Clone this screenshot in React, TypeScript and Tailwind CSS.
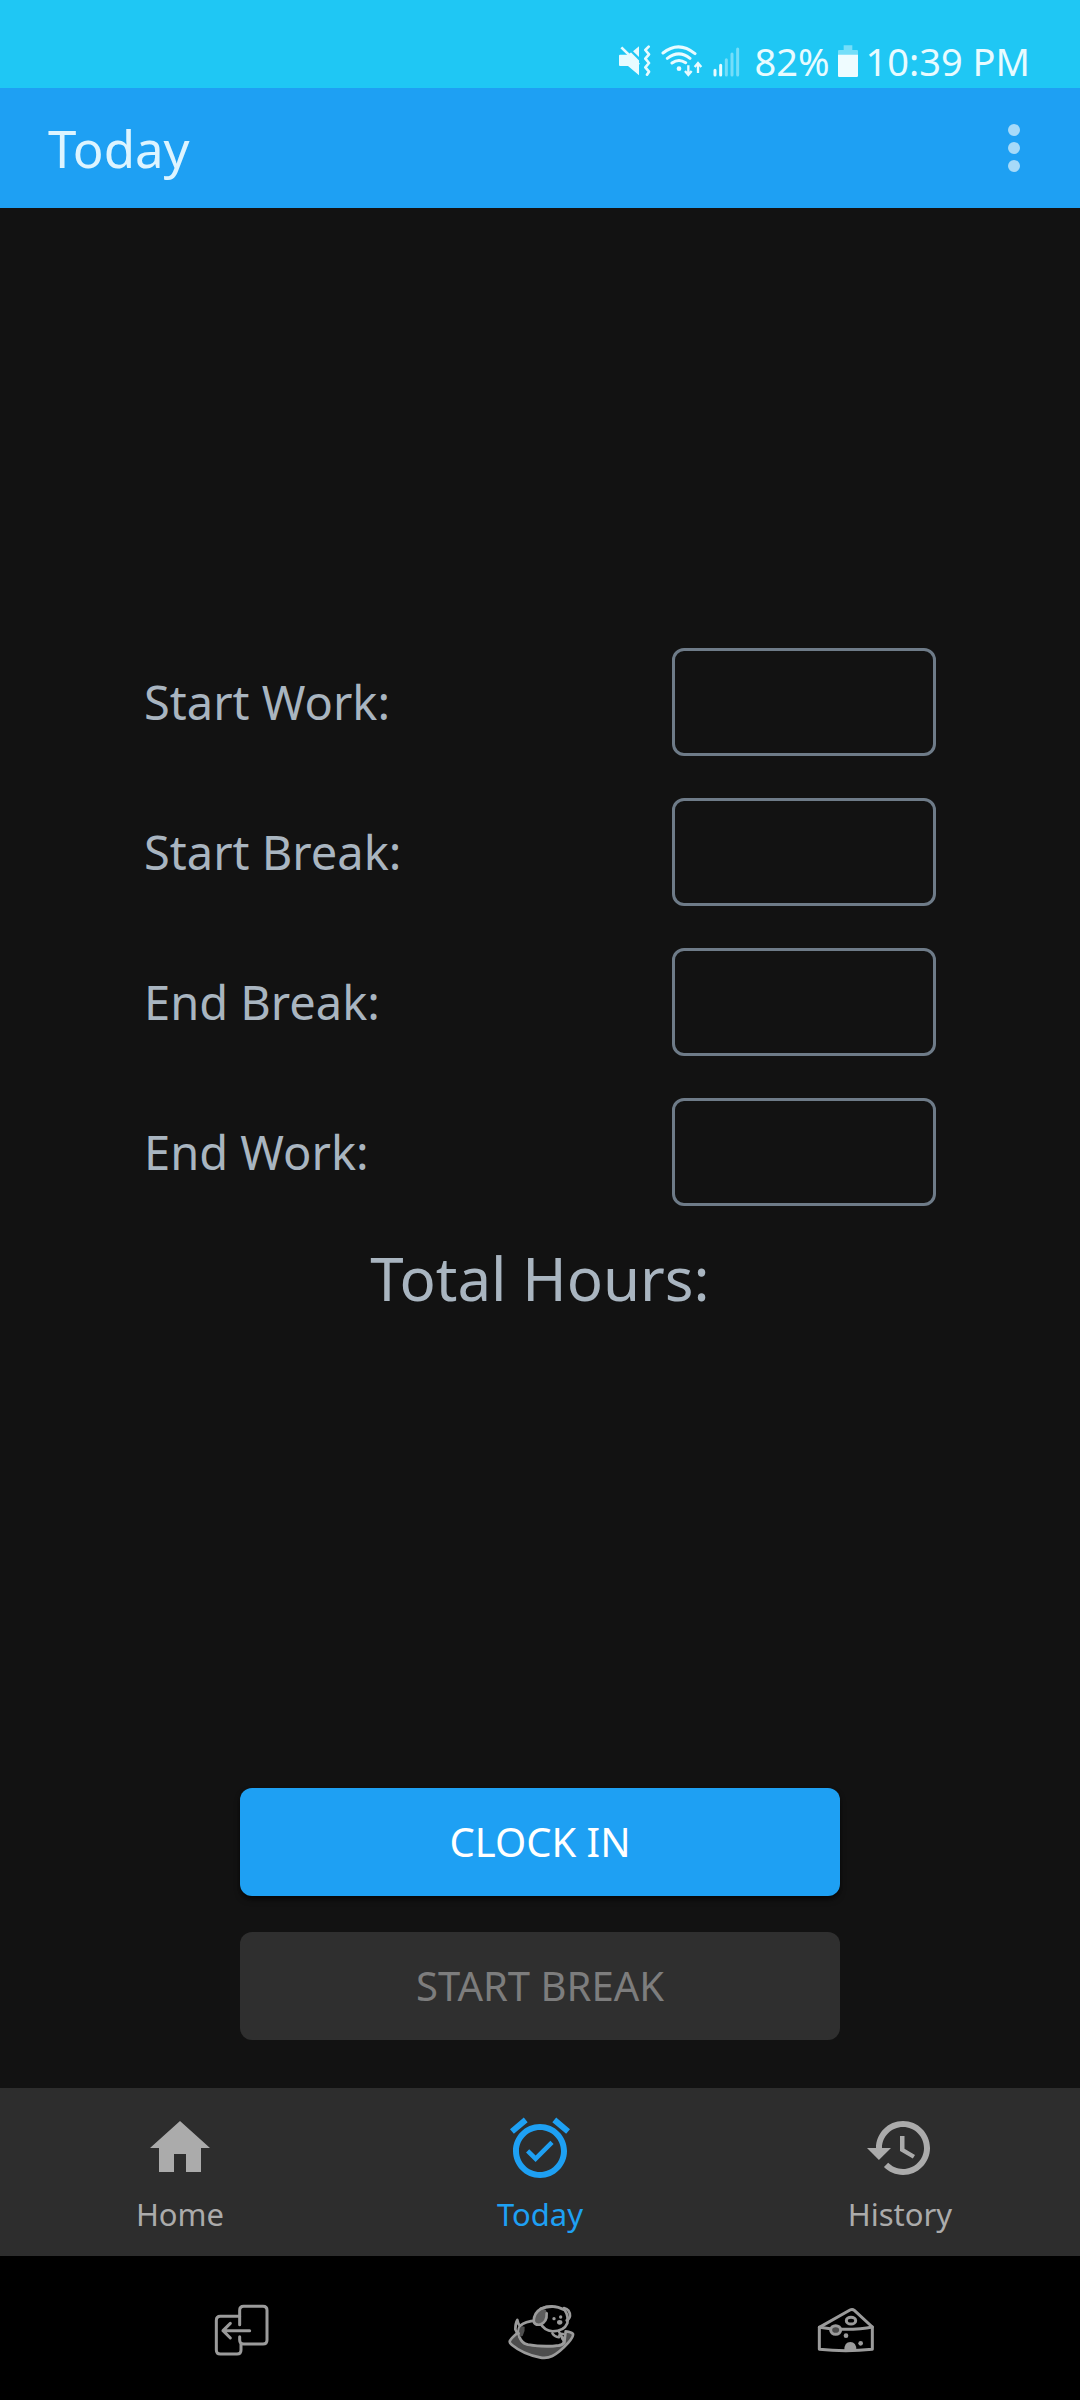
import type { ReactNode } from "react";

const fields = [
  { id: "start-work", label: "Start Work:" },
  { id: "start-break", label: "Start Break:" },
  { id: "end-break", label: "End Break:" },
  { id: "end-work", label: "End Work:" },
];

function MutedIcon() {
  return (
    <svg viewBox="57 75 96 96" className="size-8" fill="none" aria-hidden="true">
      <path d="M60 104h24l33-26v88l-33-28H60q-3 0-3-3v-28q0-3 3-3z" fill="#e8fbff" />
      <path d="M68 72l56 56V68z" fill="#1fc7f4" />
      <path d="M64 82l53 52" stroke="#e8fbff" strokeWidth="8" />
      <path d="M99 94l18-15v32z" fill="#e8fbff" />
      <path d="M146 80l-10 10 11 13-11 13 11 13-11 13 11 13-6 9" stroke="#e8fbff" strokeWidth="8" strokeLinejoin="round" strokeLinecap="round" />
    </svg>
  );
}

function WifiIcon() {
  return (
    <svg viewBox="186 75 126 96" className="h-8 w-[42px]" fill="none" stroke="#e8fbff" aria-hidden="true">
      <path d="M192 99q47-38 96 2M205 115q35-27 68 0M219 129q20-15 41-1" strokeWidth="9" strokeLinecap="round" />
      <circle cx="240" cy="146" r="7" fill="#e8fbff" stroke="none" />
      <path d="M268 136v28M258 153l10 12 10-12M297 159v-29M287 141l10-12 10 12" strokeWidth="7" />
    </svg>
  );
}

function SignalIcon() {
  return (
    <svg viewBox="333 75 81 96" className="h-8 w-[27px]" strokeWidth="9" strokeLinecap="round" aria-hidden="true">
      <path d="M339 151v14M356 136v29" stroke="#e8fbff" />
      <path d="M373 119v46M390 102v63M407 87v78" stroke="#75def9" />
    </svg>
  );
}

function BatteryIcon() {
  return (
    <svg viewBox="51 75 60 96" className="h-8 w-5" aria-hidden="true">
      <path d="M68 76h26v14h14q3 0 3 3v14H51V93q0-3 3-3h14z" fill="#75def9" />
      <path d="M51 104h60v63q0 4-4 4H55q-4 0-4-4z" fill="#effcff" />
    </svg>
  );
}

function BackIcon() {
  return (
    <svg viewBox="-15 -12 300 240" className="h-20 w-[100px]" fill="none" stroke="#9b9b9b" strokeWidth="9" strokeLinecap="round" strokeLinejoin="round" aria-hidden="true">
      <path d="M134 98V55q0-12 12-12h58q12 0 12 12v89q0 12-12 12h-58q-12 0-12-12v-10" />
      <path d="M134 73H76q-12 0-12 12v89q0 12 12 12h50q12 0 12-12v-16" />
      <path d="M84 116h80M106 94l-22 22 22 22" />
    </svg>
  );
}

function DogIcon() {
  return (
    <svg viewBox="0 -6 300 240" className="h-20 w-[100px]" fill="none" stroke="#9b9b9b" strokeWidth="8" strokeLinecap="round" strokeLinejoin="round" aria-hidden="true">
      <path d="M86 126q-20 16-26 26-3 6 5 12 34 28 84 38 20 5 38-4 22-11 48-40 16-18 14-26-4-6-22-8l-4 34q-8 10-28 10-60 2-92-8-16-12-17-34z" fill="#4d4d4d" />
      <path d="M140 92q-36 2-50 16-8 14-2 32 8 20 26 24 50 8 92 2 18-3 16-16-4-12-14-14" fill="#000" />
      <path d="M92 108l12 2q2 14-6 28l-8 2q-6-18 2-32z" fill="#4d4d4d" stroke="none" />
      <path d="M82 90q-6 10-6 28 2 8 10 12M82 90q2 12 8 18" />
      <path d="M152 56q38-16 72 4 12 18 8 40-10 24-44 24-26-2-38-26z" fill="#000" />
      <path d="M152 57q18-2 18 10 2 28-20 36-16 2-20-10 2-28 22-36z" fill="#5c5c5c" stroke="none" />
      <path d="M170 70q2 26-20 34-16 2-19-10 1-26 21-37 16-7 34-7" />
      <path d="M222 54q18 4 18 24-2 10-10 13" />
      <path d="M187 130q6 10 20 12M207 125q2 8 12 7M216 145q8 8 6 14" strokeWidth="7" />
      <circle cx="192" cy="86" r="5" fill="#9b9b9b" stroke="none" />
      <circle cx="212" cy="81" r="5" fill="#9b9b9b" stroke="none" />
      <ellipse cx="209" cy="97" rx="8" ry="7" fill="#9b9b9b" stroke="none" />
    </svg>
  );
}

function CheeseIcon() {
  return (
    <svg viewBox="-30 -6 300 240" className="h-20 w-[100px]" fill="none" stroke="#9b9b9b" strokeWidth="9" strokeLinecap="round" strokeLinejoin="round" aria-hidden="true">
      <path d="M58 112l92-52q7-4 13 1l54 50v67q-80 8-159 0z" />
      <path d="M58 112q35 6 64 6 60 1 95-7" />
      <ellipse cx="153" cy="92" rx="14" ry="10" />
      <ellipse cx="107" cy="120" rx="15" ry="13" fill="#4a4a4a" />
      <path d="M133 180q0-24 18-24t18 24z" fill="#9b9b9b" stroke="none" />
      <circle cx="138" cy="137" r="7" fill="#9b9b9b" stroke="none" />
      <circle cx="182" cy="160" r="7" fill="#9b9b9b" stroke="none" />
    </svg>
  );
}

function TabLink({ label, path, active = false }: { label: string; path: string; active?: boolean }) {
  return (
    <a
      href={"#" + label.toLowerCase()}
      aria-current={active ? "page" : undefined}
      className={
        "flex flex-1 flex-col items-center gap-2.5 " + (active ? "text-[#1ea0f3]" : "text-[#ababab]")
      }
    >
      <svg viewBox="0 0 24 24" className="size-[72px]" fill="currentColor" aria-hidden="true">
        <path d={path} />
      </svg>
      <span className="text-[31px] leading-10">{label}</span>
    </a>
  );
}

function SystemButton({ label, children }: { label: string; children: ReactNode }) {
  return (
    <button type="button" aria-label={label}>
      {children}
    </button>
  );
}

export default function App() {
  return (
    <div className="flex min-h-screen flex-col bg-[#121212] font-['Noto_Sans',sans-serif]">
      <div className="flex h-[88px] items-center justify-end bg-[#1fc7f4] pr-[50px] pt-[34px] text-[38px] leading-10 text-[#e8fbff]">
        <div className="flex items-center gap-2">
          <div className="flex items-center gap-2.5">
            <MutedIcon />
            <WifiIcon />
            <SignalIcon />
          </div>
          <span className="pl-1.5">82%</span>
          <BatteryIcon />
          <span>10:39 PM</span>
        </div>
      </div>

      <header className="flex h-[120px] items-center justify-between bg-[#1ea0f3] pl-12 pr-[30px]">
        <h1 className="text-[51px] leading-[64px] text-[#ddf4ff]">Today</h1>
        <button type="button" aria-label="More options" className="text-[#a6daf9]">
          <svg viewBox="0 0 24 24" className="size-[72px]" fill="currentColor" aria-hidden="true">
            <circle cx="12" cy="6" r="2" />
            <circle cx="12" cy="12" r="2" />
            <circle cx="12" cy="18" r="2" />
          </svg>
        </button>
      </header>

      <main className="flex flex-1 flex-col pb-12 text-[#a9b5c0]">
        <form className="flex flex-1 flex-col justify-center px-36">
          <div className="flex flex-col gap-[42px]">
            {fields.map((field) => (
              <div key={field.id} className="flex items-center justify-between">
                <label htmlFor={field.id} className="text-[47px] leading-[64px]">
                  {field.label}
                </label>
                <input
                  id={field.id}
                  type="text"
                  readOnly
                  className="h-[108px] w-[264px] rounded-xl border-3 border-[#6e7b88] bg-transparent px-4 text-center text-[47px]"
                />
              </div>
            ))}
          </div>
          <p className="mb-[30px] mt-8 text-center text-[60px] leading-[80px]">Total Hours:</p>
        </form>

        <div className="flex flex-col gap-9 px-60 text-[40px]">
          <button type="button" className="h-[108px] rounded-xl bg-[#1ea0f3] text-white shadow-md shadow-black/60">
            CLOCK IN
          </button>
          <button type="button" disabled className="h-[108px] rounded-xl bg-[#2f2f2f] text-[#7d7d7d]">
            START BREAK
          </button>
        </div>
      </main>

      <nav aria-label="Main" className="flex h-[168px] bg-[#2d2d2d] pt-6">
        <TabLink label="Home" path="M10 20v-6h4v6h5v-8h3L12 3 2 12h3v8z" />
        <TabLink
          label="Today"
          active
          path="M22 5.72l-4.6-3.86-1.29 1.53 4.6 3.86L22 5.72zM7.88 3.39L6.6 1.86 2 5.71l1.29 1.53 4.59-3.85zM12 4c-4.97 0-9 4.03-9 9s4.02 9 9 9c4.97 0 9-4.03 9-9s-4.03-9-9-9zm0 16c-3.87 0-7-3.13-7-7s3.13-7 7-7 7 3.13 7 7-3.13 7-7 7zm-1.46-5.47L8.41 12.4l-1.06 1.06 3.18 3.18 6-6-1.06-1.06-4.93 4.95z"
        />
        <TabLink
          label="History"
          path="M13 3c-4.97 0-9 4.03-9 9H1l3.89 3.89.07.14L9 12H6c0-3.87 3.13-7 7-7s7 3.13 7 7-3.13 7-7 7c-1.93 0-3.68-.79-4.94-2.06l-1.42 1.42C8.27 19.99 10.51 21 13 21c4.97 0 9-4.03 9-9s-4.03-9-9-9zm-1 5v5l4.28 2.54.72-1.21-3.5-2.08V8H12z"
        />
      </nav>

      <div className="flex h-36 items-center justify-center gap-[200px] bg-black">
        <SystemButton label="Recent apps">
          <BackIcon />
        </SystemButton>
        <SystemButton label="Home screen">
          <DogIcon />
        </SystemButton>
        <SystemButton label="Back">
          <CheeseIcon />
        </SystemButton>
      </div>
    </div>
  );
}
